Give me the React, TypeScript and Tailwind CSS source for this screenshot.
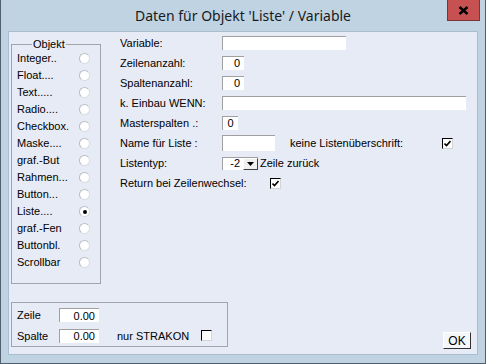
import React from "react";

const Field = ({ w, value = "", align = "right" }: { w: string; value?: string; align?: string }) => (
  <div
    className={`${w} h-[14px] bg-white border-t border-l border-[#a0a0a0] flex items-center ${
      align === "right" ? "justify-end pr-[4px]" : "justify-center"
    }`}
  >
    {value}
  </div>
);

const Check = ({ checked = false }: { checked?: boolean }) => (
  <div className="w-[11px] h-[11px] bg-white border-t border-l border-black border-r border-b border-r-[#d4d4d4] border-b-[#d4d4d4] flex items-center justify-center">
    {checked && (
      <svg width="7" height="7" viewBox="0 0 7 7">
        <path d="M0.5 3.5 L2.5 5.5 L6.5 1" stroke="black" strokeWidth="1.6" fill="none" />
      </svg>
    )}
  </div>
);

const Radio = ({ on = false }: { on?: boolean }) => (
  <div className="w-[11px] h-[11px] rounded-full bg-white border border-[#d8dce4] border-t-[#b8bcc4] border-l-[#b8bcc4] flex items-center justify-center">
    {on && <div className="w-[4px] h-[4px] rounded-full bg-black" />}
  </div>
);

const objekte = [
  "Integer..",
  "Float....",
  "Text.....",
  "Radio....",
  "Checkbox.",
  "Maske....",
  "graf.-But",
  "Rahmen...",
  "Button...",
  "Liste....",
  "graf.-Fen",
  "Buttonbl.",
  "Scrollbar",
];

const Row = ({ label, children }: { label: string; children?: React.ReactNode }) => (
  <div className="h-[20px] flex items-center">
    <span className="w-[102px]">{label}</span>
    {children}
  </div>
);

export default function App() {
  return (
    <div className="w-[486px] h-[364px] flex flex-col bg-[#bfd3e3] border-x border-b border-[#51606f] text-black text-[11px] font-['Liberation_Sans',Arial,sans-serif]">
      <div className="relative h-[31px] flex items-center justify-center">
        <span className="text-[14px] text-[#1a1a1a] font-['Noto_Sans',sans-serif] pb-[1px]">
          Daten für Objekt 'Liste' / Variable
        </span>
        <div className="absolute top-0 right-[5px] w-[33px] h-[21px] bg-[#c75050] border border-t-0 border-[#7a3434] flex items-center justify-center">
          <svg width="11" height="9" viewBox="0 0 11 9">
            <path d="M1.5 1 L9.5 8 M9.5 1 L1.5 8" stroke="black" strokeWidth="2.4" />
          </svg>
        </div>
      </div>

      <div className="flex-1 mx-[7px] mb-[8px] bg-[#e7ebf5] border border-[#a9bdd0] flex flex-col">
        <div className="flex items-start pl-[2px]">
          <div className="relative mt-[12px] w-[90px] h-[240px] border border-[#a0a4ab] pt-[5px] pl-[5px]">
            <span className="absolute -top-[7px] left-[20px] bg-[#e7ebf5] px-[1px] leading-[13px]">Objekt</span>
            {objekte.map((o) => (
              <div key={o} className="h-[17px] flex items-center">
                <span className="w-[62px]">{o}</span>
                <Radio on={o === "Liste...."} />
              </div>
            ))}
          </div>

          <div className="ml-[19px] mt-[1px] flex flex-col">
            <Row label="Variable:">
              <Field w="w-[124px]" />
            </Row>
            <Row label="Zeilenanzahl:">
              <Field w="w-[22px]" value="0" />
            </Row>
            <Row label="Spaltenanzahl:">
              <Field w="w-[22px]" value="0" />
            </Row>
            <Row label="k. Einbau WENN:">
              <Field w="w-[244px]" />
            </Row>
            <Row label="Masterspalten .:">
              <Field w="w-[16px]" value="0" align="center" />
            </Row>
            <Row label="Name für Liste :">
              <div className="w-[53px] h-[16px] bg-white border-t border-l border-[#a0a0a0]" />
              <span className="ml-[15px] w-[152px]">keine Listenüberschrift:</span>
              <Check checked />
            </Row>
            <Row label="Listentyp:">
              <div className="w-[36px] h-[13px] bg-white border-t border-l border-[#a0a0a0] flex items-center">
                <span className="flex-1 text-right pr-[3px]">-2</span>
                <div className="w-[15px] h-[12px] bg-[#f0f0f0] border-t border-l border-white border-r border-b border-r-[#404040] border-b-[#404040] flex items-center justify-center">
                  <svg width="7" height="4" viewBox="0 0 7 4">
                    <path d="M0 0 L7 0 L3.5 4 Z" fill="black" />
                  </svg>
                </div>
              </div>
              <span className="ml-[2px]">Zeile zurück</span>
            </Row>
            <div className="h-[20px] flex items-center">
              <span className="w-[150px]">Return bei Zeilenwechsel:</span>
              <Check checked />
            </div>
          </div>
        </div>

        <div className="mt-auto flex items-end justify-between pl-[2px] pr-[6px] mb-[5px]">
          <div className="w-[217px] h-[45px] mb-[2px] border border-[#a0a4ab] pl-[5px] pt-[2px] flex flex-col">
            <div className="h-[21px] flex items-center">
              <span className="w-[42px]">Zeile</span>
              <Field w="w-[40px]" value="0.00" />
            </div>
            <div className="h-[21px] flex items-center">
              <span className="w-[42px]">Spalte</span>
              <Field w="w-[40px]" value="0.00" />
              <span className="ml-[18px] w-[84px]">nur STRAKON</span>
              <Check />
            </div>
          </div>
          <div className="w-[28px] h-[17px] bg-[#f4f6fa] border-t border-l border-white border-r border-b border-r-[#303030] border-b-[#303030] flex items-center justify-center text-[12px]">
            OK
          </div>
        </div>
      </div>
    </div>
  );
}
